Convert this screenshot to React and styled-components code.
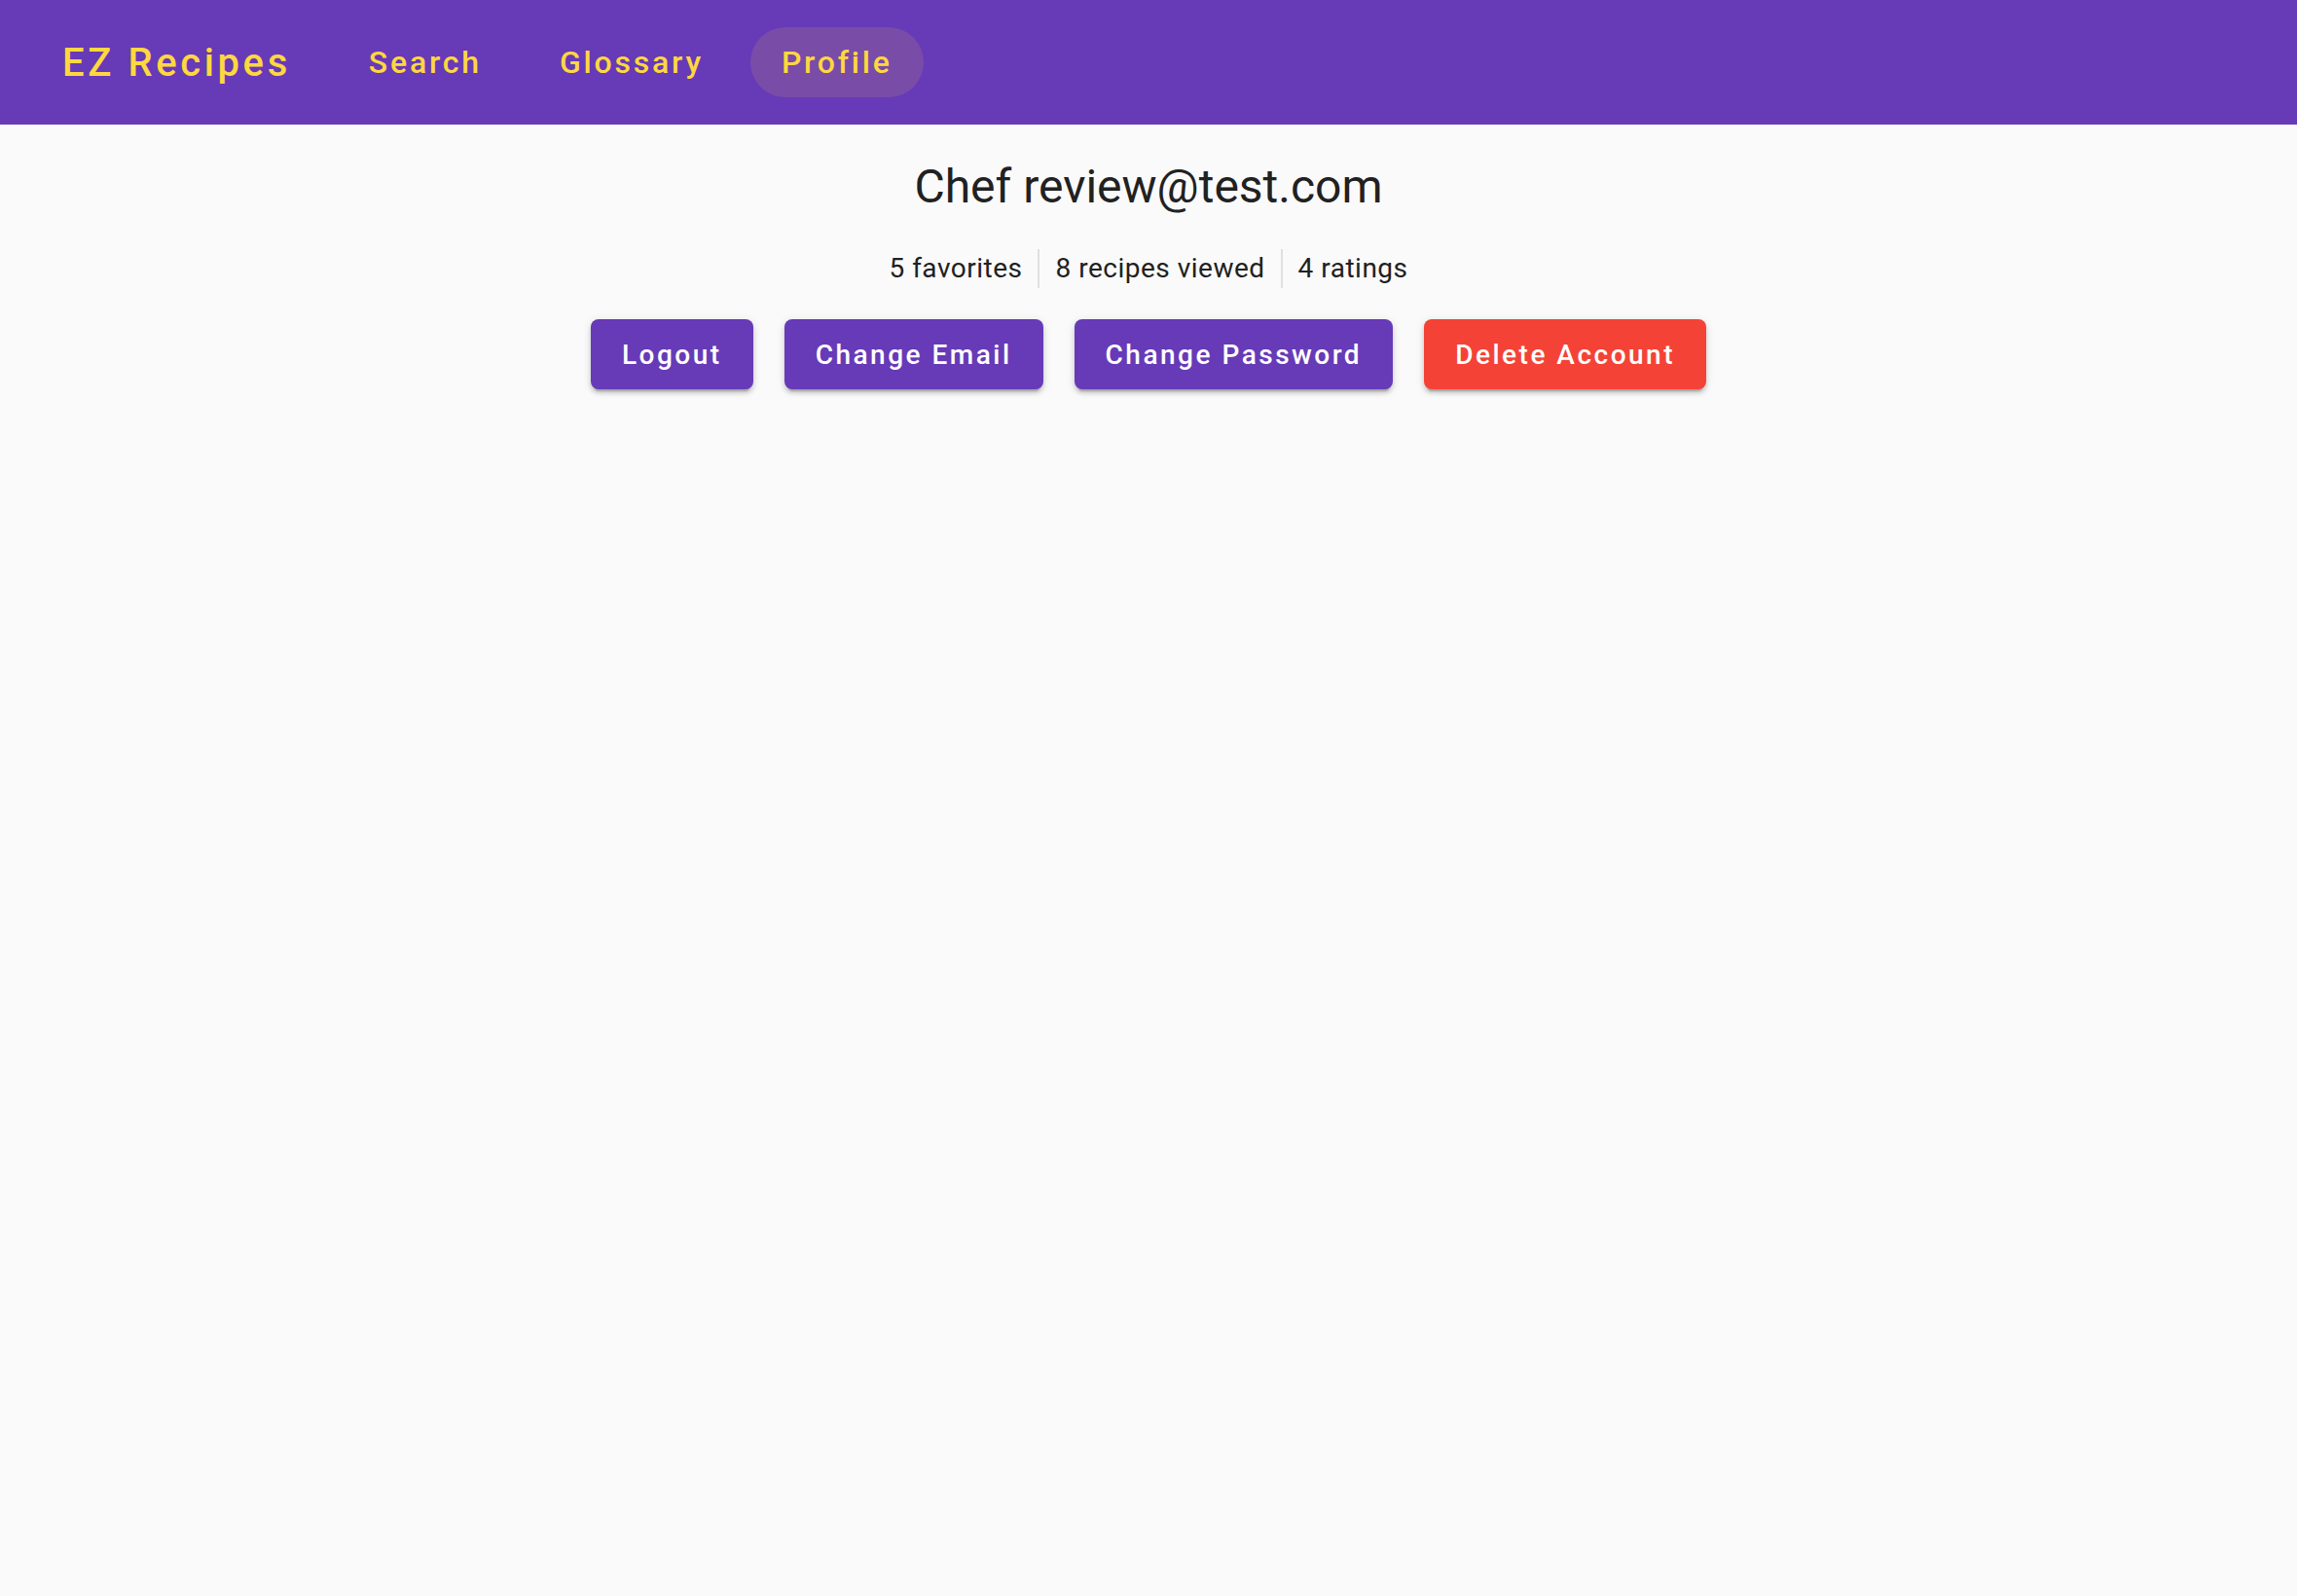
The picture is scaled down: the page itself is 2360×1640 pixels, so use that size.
import React from 'react';
import styled, { createGlobalStyle } from 'styled-components';

const GlobalStyle = createGlobalStyle`
  html, body {
    margin: 0;
    padding: 0;
    background-color: #fafafa;
    font-family: Roboto, "Noto Sans", "Liberation Sans", sans-serif;
    color: #212121;
  }
  #root {
    min-height: 100vh;
  }
`;

const Page = styled.div`
  min-height: 100vh;
  background-color: #fafafa;
`;

const Toolbar = styled.header`
  display: flex;
  align-items: center;
  gap: 16px;
  height: 128px;
  padding: 0 32px;
  background-color: #673ab7;
  box-sizing: border-box;
`;

const NavButton = styled.button`
  display: inline-flex;
  align-items: center;
  height: 72px;
  padding: 0 32px;
  border: none;
  border-radius: 36px;
  background-color: ${(p) => (p.$active ? 'rgba(255, 215, 64, 0.12)' : 'transparent')};
  color: #ffd740;
  font-family: Roboto, sans-serif;
  font-weight: 500;
  font-size: ${(p) => (p.$brand ? '40px' : '32px')};
  letter-spacing: ${(p) => (p.$brand ? '3.6px' : '2.8px')};
  cursor: pointer;
`;

const Main = styled.main`
  display: flex;
  flex-direction: column;
  align-items: center;
  padding-top: 32px;
`;

const Headline = styled.h1`
  margin: 0;
  font-size: 48px;
  line-height: 64px;
  font-weight: 400;
  color: #212121;
`;

const Stats = styled.div`
  display: flex;
  margin-top: 32px;
`;

const Stat = styled.span`
  padding: 0 16px;
  font-size: 28px;
  line-height: 40px;
  letter-spacing: 0.5px;
  color: #212121;

  & + & {
    border-left: 2px solid #e0e0e0;
  }
`;

const Actions = styled.div`
  display: flex;
  gap: 32px;
  margin-top: 32px;
`;

const ActionButton = styled.button`
  height: 72px;
  padding: 0 32px;
  border: none;
  border-radius: 8px;
  background-color: ${(p) => (p.$danger ? '#f44336' : '#673ab7')};
  color: #ffffff;
  font-family: Roboto, sans-serif;
  font-weight: 500;
  font-size: 28px;
  letter-spacing: 2.5px;
  cursor: pointer;
  box-shadow: 0 6px 2px -4px rgba(0, 0, 0, 0.2), 0 4px 4px 0 rgba(0, 0, 0, 0.14),
    0 2px 10px 0 rgba(0, 0, 0, 0.12);
`;

const stats = ['5 favorites', '8 recipes viewed', '4 ratings'];

const App = () => {
  return (
    <Page>
      <GlobalStyle />
      <Toolbar>
        <NavButton $brand>EZ Recipes</NavButton>
        <NavButton>Search</NavButton>
        <NavButton>Glossary</NavButton>
        <NavButton $active>Profile</NavButton>
      </Toolbar>
      <Main>
        <Headline>Chef review@test.com</Headline>
        <Stats>
          {stats.map((s) => (
            <Stat key={s}>{s}</Stat>
          ))}
        </Stats>
        <Actions>
          <ActionButton>Logout</ActionButton>
          <ActionButton>Change Email</ActionButton>
          <ActionButton>Change Password</ActionButton>
          <ActionButton $danger>Delete Account</ActionButton>
        </Actions>
      </Main>
    </Page>
  );
};

export default App;
